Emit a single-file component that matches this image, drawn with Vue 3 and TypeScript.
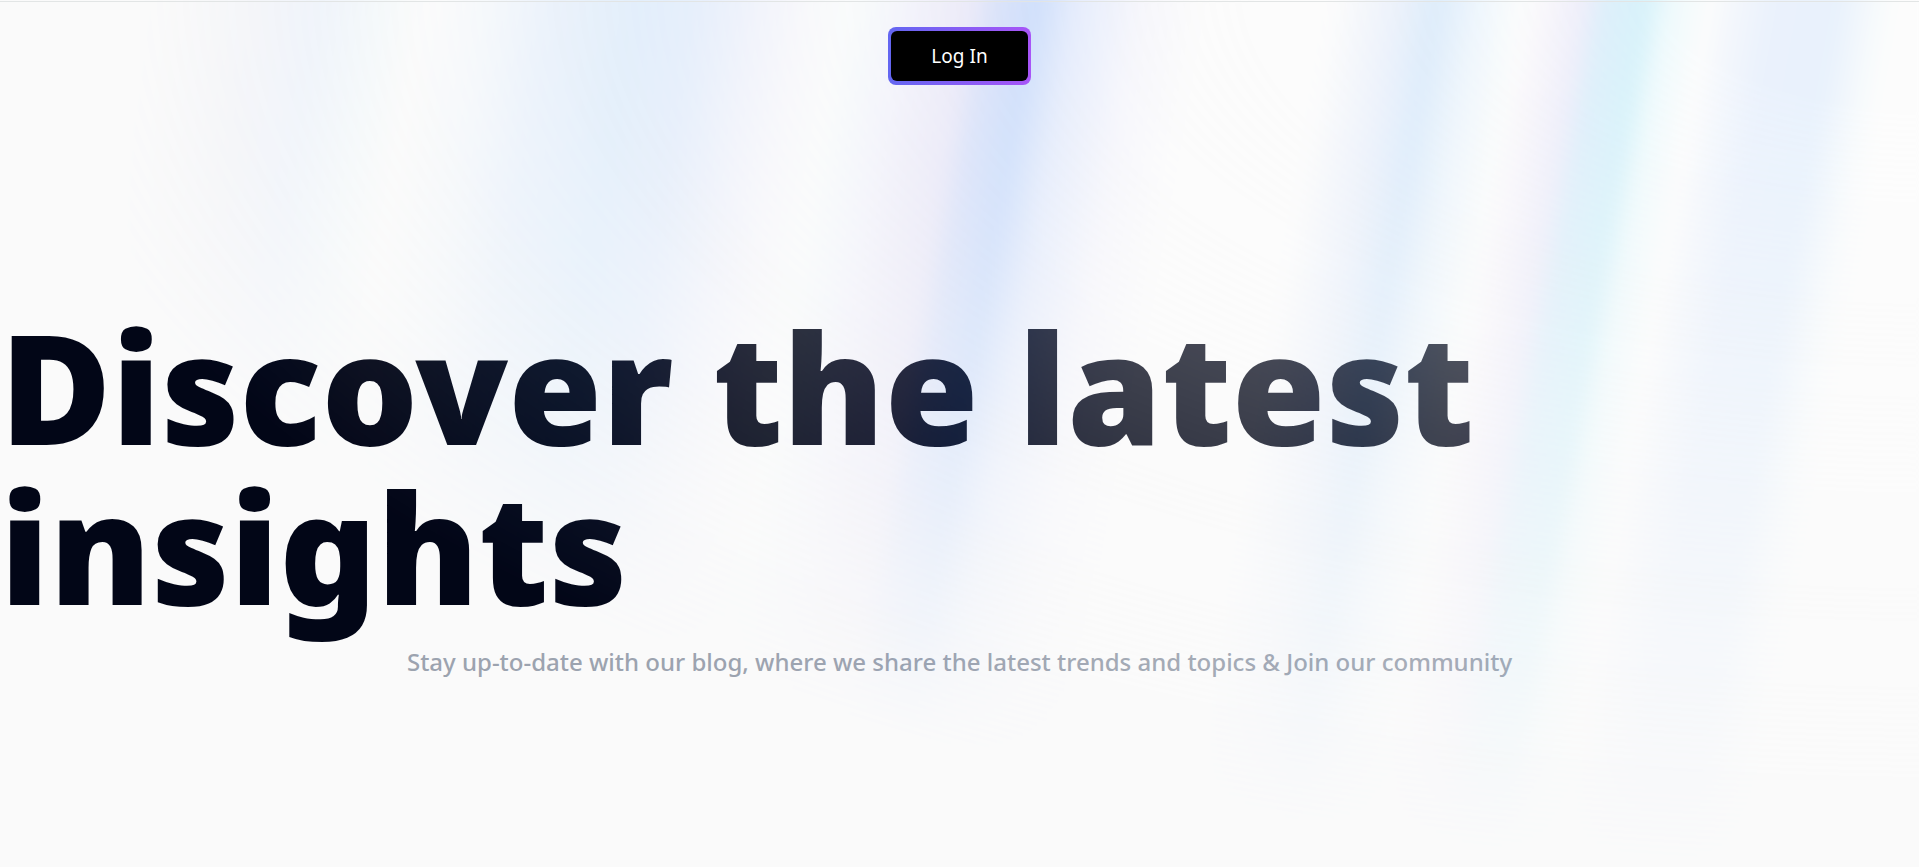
<script setup lang="ts">
const title = 'Discover the latest insights'
const subtitle =
  'Stay up-to-date with our blog, where we share the latest trends and topics & Join our community'
</script>

<template>
  <main class="page">
    <header class="topbar">
      <button class="login" type="button">
        <span class="login-label">Log In</span>
      </button>
    </header>
    <section class="hero">
      <h1 class="title">{{ title }}</h1>
      <p class="subtitle">{{ subtitle }}</p>
    </section>
    <div class="aurora" aria-hidden="true"></div>
  </main>
</template>

<style>
body {
  margin: 0;
  background: #fafafa;
}
</style>

<style scoped>
.page {
  position: relative;
  box-sizing: border-box;
  min-height: 100vh;
  overflow: hidden;
  padding-top: 1px;
  background: #fafafa;
  font-family: 'Segoe UI', 'Noto Sans', 'Open Sans', sans-serif;
}

.topbar {
  position: relative;
  z-index: 2;
  display: flex;
  justify-content: center;
  padding-top: 25px;
  border-top: 1px solid #e2e5e5;
}

.login {
  padding: 4px 3px;
  border: 0;
  border-radius: 8px;
  background: linear-gradient(90deg, #6366f1, #a855f7);
  color: #fff;
  font-family: inherit;
  font-size: 19px;
  line-height: 26px;
  cursor: pointer;
}

.login-label {
  display: block;
  padding: 12px 40px;
  border-radius: 6px;
  background: #000;
}

.hero {
  display: flex;
  flex-direction: column;
  align-items: center;
  padding-top: 222px;
}

.title {
  width: 100%;
  margin: 0;
  color: #020617;
  font-size: 152px;
  font-weight: 900;
  line-height: 160px;
}

.subtitle {
  margin: 16px 0 0;
  color: #9ca3af;
  font-size: 24px;
  font-weight: 500;
  line-height: 38px;
}

.aurora {
  position: absolute;
  inset: -16px;
  z-index: 1;
  opacity: 0.5;
  filter: blur(8px);
  pointer-events: none;
  background: linear-gradient(
    100deg,
    rgb(253, 253, 253) 8%,
    rgb(170, 185, 235) 13%,
    rgb(140, 185, 255) 16%,
    rgb(206, 241, 255) 19%,
    rgb(255, 255, 255) 21%,
    rgb(216, 236, 255) 24%,
    rgb(160, 202, 255) 27%,
    rgb(130, 192, 255) 31%,
    rgb(158, 197, 255) 34%,
    rgb(215, 224, 255) 37%,
    rgb(242, 242, 254) 39%,
    rgb(250, 255, 255) 41%,
    rgb(238, 248, 254) 42%,
    rgb(226, 226, 254) 44%,
    rgb(216, 214, 248) 45%,
    rgb(200, 196, 244) 47%,
    rgb(150, 175, 247) 48%,
    rgb(114, 165, 253) 50%,
    rgb(190, 210, 255) 52%,
    rgb(240, 240, 255) 55%,
    rgb(255, 255, 255) 58%,
    rgb(255, 255, 255) 64%,
    rgb(219, 231, 252) 67%,
    rgb(184, 218, 252) 69%,
    rgb(225, 241, 255) 71%,
    rgb(250, 254, 254) 73%,
    rgb(248, 244, 252) 74%,
    rgb(225, 225, 250) 76%,
    rgb(191, 227, 250) 77%,
    rgb(180, 234, 250) 79%,
    rgb(226, 250, 255) 80%,
    rgb(254, 254, 255) 82%,
    rgb(240, 246, 255) 83%,
    rgb(220, 234, 255) 85%,
    rgb(216, 234, 255) 88%,
    rgb(246, 252, 255) 90%,
    rgb(255, 255, 255) 91%
  );
  mask-image: radial-gradient(ellipse at 100% 0%, #000 10%, transparent 70%);
}
</style>
